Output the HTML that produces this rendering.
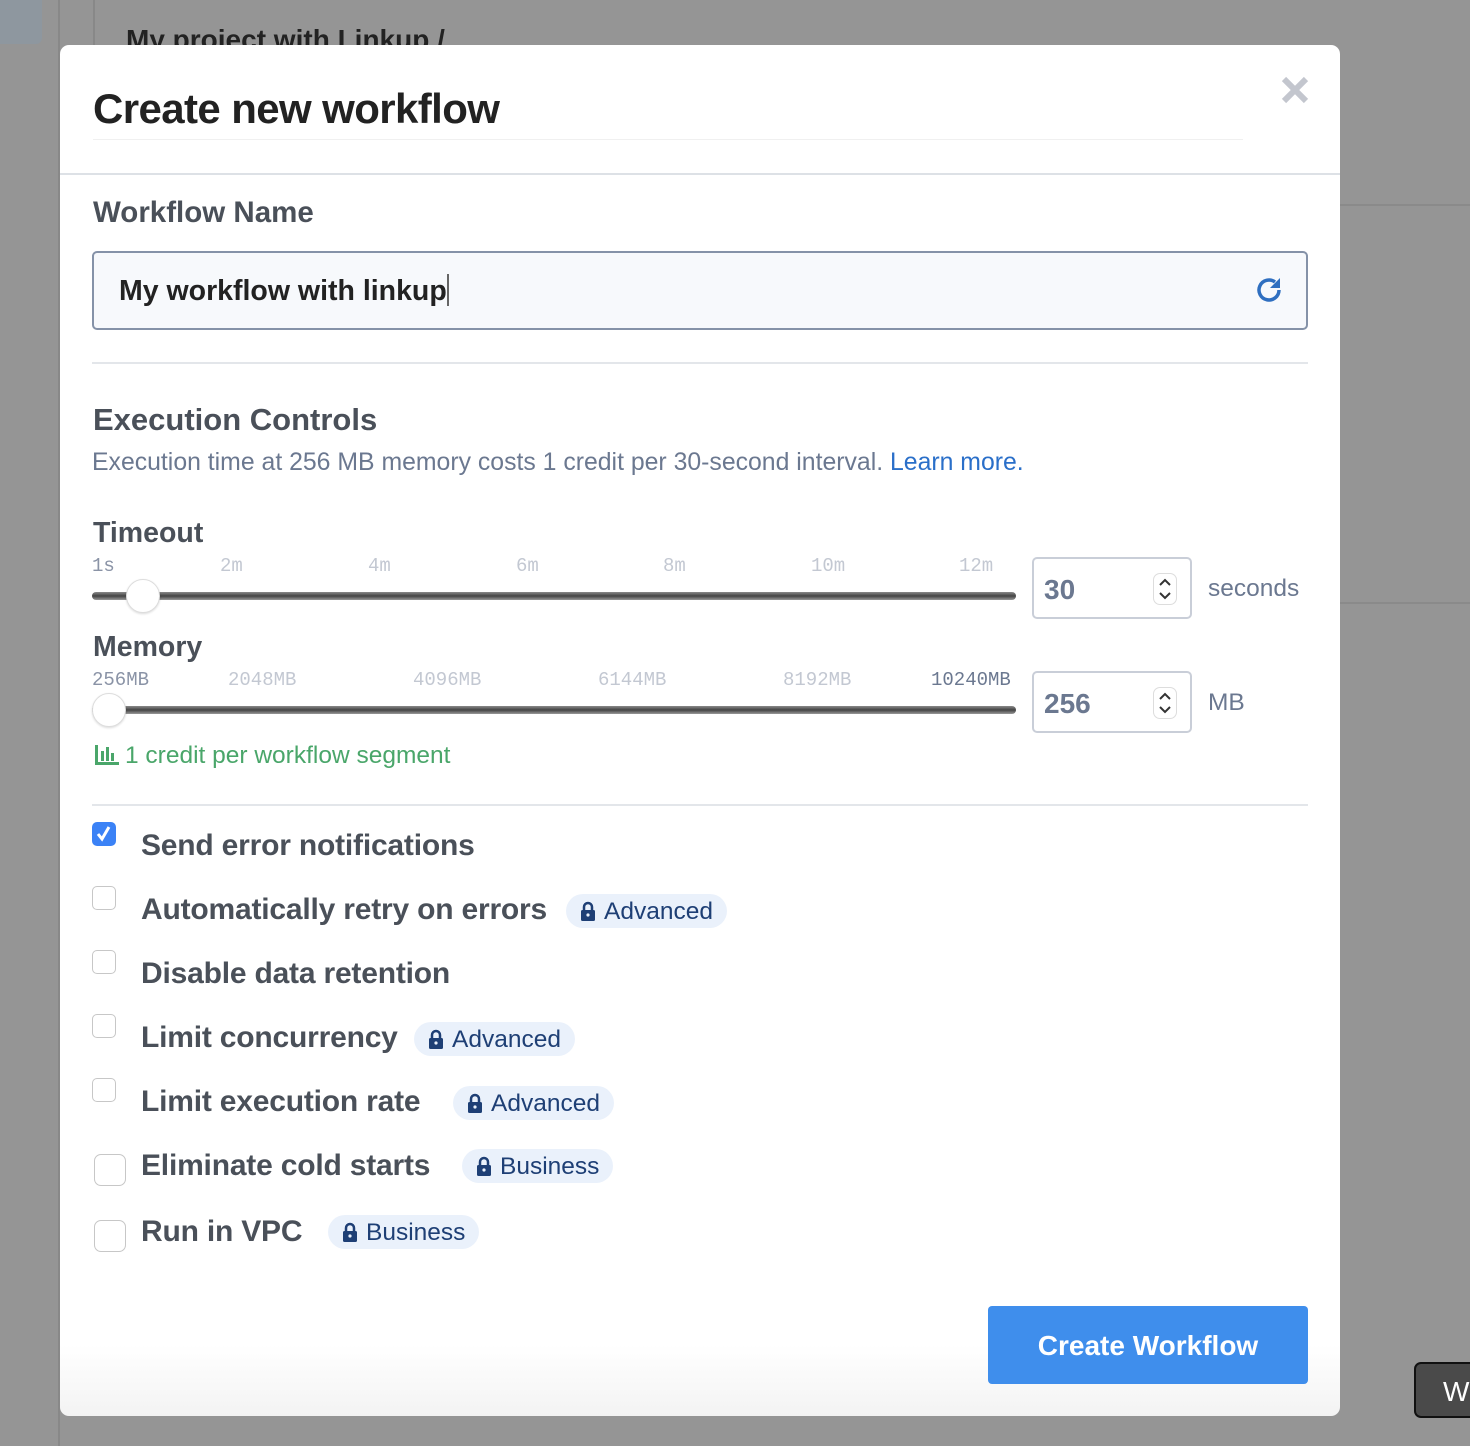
<!DOCTYPE html>
<html><head><meta charset="utf-8"><style>
*{box-sizing:border-box;margin:0;padding:0}
body{width:1470px;height:1446px;background:#959595;font-family:"Liberation Sans",sans-serif;position:relative;overflow:hidden}
.a{position:absolute}
.modal{left:60px;top:45px;width:1280px;height:1371px;background:linear-gradient(#fff 0,#fff 1300px,#f3f3f3 1371px);border-radius:9px}
.lbl{color:#4a5059;font-weight:bold}
.tick{font-family:"Liberation Mono",monospace;font-size:19px;color:#c3c8d2}
.track{height:8px;background:linear-gradient(#8a8a8a,#444 50%,#999);border-radius:4px}
.thumb{width:34px;height:34px;border-radius:50%;background:#fff;border:1px solid #ddd;box-shadow:0 1px 2px rgba(0,0,0,.15)}
.num{width:160px;height:62px;border:2px solid #c9ced8;border-radius:5px;background:#fff}
.num span{position:absolute;left:10px;top:15px;font-size:28px;font-weight:bold;color:#6b7890}
.spin{position:absolute;right:13px;top:14px;width:24px;height:32px;border:1px solid #ddd;border-radius:7px;background:#fff}
.cb{width:24px;height:24px;border:1.5px solid #c7c7c7;border-radius:5px;background:#fff}
.opt{font-size:30px;font-weight:bold;color:#4a5059;letter-spacing:-0.2px}
.badge{height:34px;border-radius:17px;background:#eaf1fb;color:#1e3f75;font-size:24.5px;padding:4px 14px 0 14px;white-space:nowrap}
.badge svg{vertical-align:-2px;margin-right:8px}
</style></head><body>
<div class="a" style="left:0;top:0;width:42px;height:44px;background:#8e979f;border-radius:0 0 6px 0"></div>
<div class="a" style="left:58px;top:0;width:2px;height:1446px;background:#888"></div>
<div class="a" style="left:93px;top:0;width:2px;height:45px;background:#888"></div>
<div class="a" style="left:126px;top:24px;font-size:28px;font-weight:bold;color:#222">My project with Linkup  /</div>
<div class="a" style="left:1340px;top:204px;width:130px;height:2px;background:#8a8a8a"></div>
<div class="a" style="left:1340px;top:602px;width:130px;height:2px;background:#8a8a8a"></div>
<div class="a" style="left:1414px;top:1362px;width:70px;height:56px;background:#4a4a4a;border:2px solid #111;border-radius:7px;color:#fff;font-size:28px;padding:12px 0 0 27px">W</div>

<div class="a modal">
 <div class="a" style="left:33px;top:40px;font-size:42px;font-weight:bold;color:#222;letter-spacing:-0.6px">Create new workflow</div>
 <div class="a" style="left:33px;top:94px;width:1150px;height:1px;background:#f0f0f0"></div>
 <svg class="a" style="left:1221px;top:31px" width="28" height="28" viewBox="0 0 28 28"><path d="M3 3L25 25M25 3L3 25" stroke="#c3c6ce" stroke-width="6"/></svg>
 <div class="a" style="left:0;top:128px;width:1280px;height:2px;background:#dde1e6"></div>

 <div class="a lbl" style="left:33px;top:151px;font-size:29.5px">Workflow Name</div>
 <div class="a" style="left:32px;top:206px;width:1216px;height:79px;border:2px solid #8592a8;border-radius:5px;background:#f7f9fc"></div>
 <div class="a" style="left:59px;top:229px;font-size:28.5px;font-weight:bold;color:#222">My workflow with linkup<span style="display:inline-block;width:2px;height:32px;background:#666;vertical-align:-6px"></span></div>
 <svg class="a" style="left:1193px;top:229px" width="32" height="32" viewBox="0 0 32 32"><path d="M26 16A10 10 0 1 1 22 8" fill="none" stroke="#2f6fc0" stroke-width="3.5"/><path d="M27 4V14H17Z" fill="#2f6fc0"/></svg>
 <div class="a" style="left:32px;top:317px;width:1216px;height:2px;background:#e3e6ea"></div>

 <div class="a lbl" style="left:33px;top:357px;font-size:31px">Execution Controls</div>
 <div class="a" style="left:32px;top:404px;font-size:24.8px;color:#6b7890">Execution time at 256 MB memory costs 1 credit per 30-second interval. <span style="color:#2a6fc9">Learn more.</span></div>

 <div class="a lbl" style="left:33px;top:472px;font-size:28.5px">Timeout</div>
 <div class="a tick" style="left:32px;top:510px;color:#8a93a6">1s</div>
 <div class="a tick" style="left:160px;top:510px">2m</div>
 <div class="a tick" style="left:308px;top:510px">4m</div>
 <div class="a tick" style="left:456px;top:510px">6m</div>
 <div class="a tick" style="left:603px;top:510px">8m</div>
 <div class="a tick" style="left:751px;top:510px">10m</div>
 <div class="a tick" style="left:899px;top:510px">12m</div>
 <div class="a track" style="left:32px;top:547px;width:924px"></div>
 <div class="a thumb" style="left:66px;top:534px"></div>
 <div class="a num" style="left:972px;top:512px"><span>30</span><div class="spin"><svg width="22" height="30" viewBox="0 0 22 30"><path d="M6 11L11 6L16 11M6 19L11 24L16 19" fill="none" stroke="#333" stroke-width="2"/></svg></div></div>
 <div class="a" style="left:1148px;top:530px;font-size:24.5px;color:#6b7890">seconds</div>

 <div class="a lbl" style="left:33px;top:586px;font-size:28.5px">Memory</div>
 <div class="a tick" style="left:32px;top:624px;color:#8a93a6">256MB</div>
 <div class="a tick" style="left:168px;top:624px">2048MB</div>
 <div class="a tick" style="left:353px;top:624px">4096MB</div>
 <div class="a tick" style="left:538px;top:624px">6144MB</div>
 <div class="a tick" style="left:723px;top:624px">8192MB</div>
 <div class="a tick" style="left:871px;top:624px;color:#6b7890">10240MB</div>
 <div class="a track" style="left:32px;top:661px;width:924px"></div>
 <div class="a thumb" style="left:32px;top:648px"></div>
 <div class="a num" style="left:972px;top:626px"><span>256</span><div class="spin"><svg width="22" height="30" viewBox="0 0 22 30"><path d="M6 11L11 6L16 11M6 19L11 24L16 19" fill="none" stroke="#333" stroke-width="2"/></svg></div></div>
 <div class="a" style="left:1148px;top:644px;font-size:24.5px;color:#6b7890">MB</div>

 <div class="a" style="left:34px;top:697px;font-size:24.5px;color:#4aa66a"><svg width="25" height="20" viewBox="0 0 25 20" style="vertical-align:-2px;margin-right:6px"><path d="M1 0V20H25V17H4V0Z M7 6H10V16H7Z M12 2H15V16H12Z M17 8H20V16H17Z" fill="#4aa66a"/></svg>1 credit per workflow segment</div>
 <div class="a" style="left:32px;top:759px;width:1216px;height:2px;background:#e3e6ea"></div>

 <div class="a cb" style="left:32px;top:777px;background:#3b82f6;border-color:#3b82f6"><svg width="22" height="22" viewBox="0 0 22 22"><path d="M5 11L9 16L16 4" fill="none" stroke="#fff" stroke-width="3"/></svg></div>
 <div class="a opt" style="left:81px;top:784px">Send error notifications</div>

 <div class="a cb" style="left:32px;top:841px"></div>
 <div class="a opt" style="left:81px;top:848px">Automatically retry on errors</div>
 <div class="a badge" style="left:506px;top:849px"><svg width="16" height="20" viewBox="0 0 16 20"><path d="M4 9V6a4 4 0 0 1 8 0v3" fill="none" stroke="#1e3f75" stroke-width="2.5"/><rect x="1" y="9" width="14" height="11" rx="1.5" fill="#1e3f75"/><circle cx="8" cy="14" r="1.6" fill="#eaf1fb"/></svg>Advanced</div>

 <div class="a cb" style="left:32px;top:905px"></div>
 <div class="a opt" style="left:81px;top:912px">Disable data retention</div>

 <div class="a cb" style="left:32px;top:969px"></div>
 <div class="a opt" style="left:81px;top:976px">Limit concurrency</div>
 <div class="a badge" style="left:354px;top:977px"><svg width="16" height="20" viewBox="0 0 16 20"><path d="M4 9V6a4 4 0 0 1 8 0v3" fill="none" stroke="#1e3f75" stroke-width="2.5"/><rect x="1" y="9" width="14" height="11" rx="1.5" fill="#1e3f75"/><circle cx="8" cy="14" r="1.6" fill="#eaf1fb"/></svg>Advanced</div>

 <div class="a cb" style="left:32px;top:1033px"></div>
 <div class="a opt" style="left:81px;top:1040px">Limit execution rate</div>
 <div class="a badge" style="left:393px;top:1041px"><svg width="16" height="20" viewBox="0 0 16 20"><path d="M4 9V6a4 4 0 0 1 8 0v3" fill="none" stroke="#1e3f75" stroke-width="2.5"/><rect x="1" y="9" width="14" height="11" rx="1.5" fill="#1e3f75"/><circle cx="8" cy="14" r="1.6" fill="#eaf1fb"/></svg>Advanced</div>

 <div class="a cb" style="left:34px;top:1109px;width:32px;height:32px;border-radius:7px"></div>
 <div class="a opt" style="left:81px;top:1104px">Eliminate cold starts</div>
 <div class="a badge" style="left:402px;top:1104px"><svg width="16" height="20" viewBox="0 0 16 20"><path d="M4 9V6a4 4 0 0 1 8 0v3" fill="none" stroke="#1e3f75" stroke-width="2.5"/><rect x="1" y="9" width="14" height="11" rx="1.5" fill="#1e3f75"/><circle cx="8" cy="14" r="1.6" fill="#eaf1fb"/></svg>Business</div>

 <div class="a cb" style="left:34px;top:1175px;width:32px;height:32px;border-radius:7px"></div>
 <div class="a opt" style="left:81px;top:1170px">Run in VPC</div>
 <div class="a badge" style="left:268px;top:1170px"><svg width="16" height="20" viewBox="0 0 16 20"><path d="M4 9V6a4 4 0 0 1 8 0v3" fill="none" stroke="#1e3f75" stroke-width="2.5"/><rect x="1" y="9" width="14" height="11" rx="1.5" fill="#1e3f75"/><circle cx="8" cy="14" r="1.6" fill="#eaf1fb"/></svg>Business</div>

 <div class="a" style="left:928px;top:1261px;width:320px;height:78px;background:#3f8eec;border-radius:4px;color:#fff;font-size:28px;font-weight:bold;text-align:center;line-height:80px">Create Workflow</div>
</div>
</body></html>
